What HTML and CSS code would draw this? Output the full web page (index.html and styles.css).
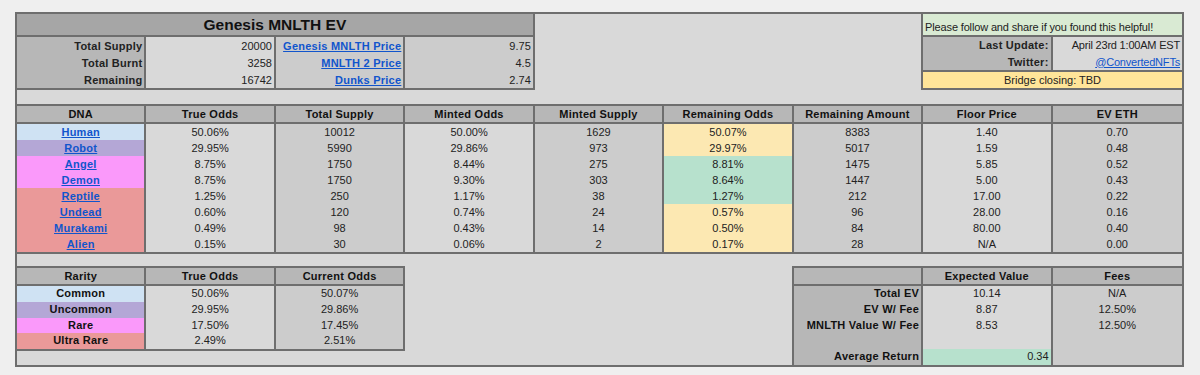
FILE: index.html
```html
<!DOCTYPE html>
<html>
<head>
<meta charset="utf-8">
<title>Genesis MNLTH EV</title>
<link rel="stylesheet" href="styles.css">
</head>
<body>
<div class="sheet">
  <div class="box title">Genesis MNLTH EV</div>

  <div class="box info g3 right bold">
    <div class="r">Total Supply</div>
    <div class="r">Total Burnt</div>
    <div class="r">Remaining</div>
  </div>
  <div class="box info g1 right">
    <div class="r">20000</div>
    <div class="r">3258</div>
    <div class="r">16742</div>
  </div>
  <div class="box info g2 right bold">
    <div class="r"><a href="#">Genesis MNLTH Price</a></div>
    <div class="r"><a href="#">MNLTH 2 Price</a></div>
    <div class="r"><a href="#">Dunks Price</a></div>
  </div>
  <div class="box info g2 right">
    <div class="r">9.75</div>
    <div class="r">4.5</div>
    <div class="r">2.74</div>
  </div>

  <div class="box follow er">Please follow and share if you found this helpful!</div>
  <div class="box meta-l g3 right bold">
    <div class="r">Last Update:</div>
    <div class="r">Twitter:</div>
  </div>
  <div class="box meta-v g1 right er">
    <div class="r">April 23rd 1:00AM EST</div>
    <div class="r"><a href="#" class="plain">@ConvertedNFTs</a></div>
  </div>
  <div class="box bridge er">Bridge closing: TBD</div>

  <div class="box hd">DNA</div>
  <div class="box hd">True Odds</div>
  <div class="box hd">Total Supply</div>
  <div class="box hd">Minted Odds</div>
  <div class="box hd">Minted Supply</div>
  <div class="box hd">Remaining Odds</div>
  <div class="box hd">Remaining Amount</div>
  <div class="box hd">Floor Price</div>
  <div class="box hd er">EV ETH</div>

  <div class="box dna bold">
    <div class="r human"><a href="#">Human</a></div>
    <div class="r robot"><a href="#">Robot</a></div>
    <div class="r pink"><a href="#">Angel</a></div>
    <div class="r pink"><a href="#">Demon</a></div>
    <div class="r red"><a href="#">Reptile</a></div>
    <div class="r red"><a href="#">Undead</a></div>
    <div class="r red"><a href="#">Murakami</a></div>
    <div class="r red"><a href="#">Alien</a></div>
  </div>
  <div class="box dna g1">
    <div class="r">50.06%</div><div class="r">29.95%</div><div class="r">8.75%</div><div class="r">8.75%</div>
    <div class="r">1.25%</div><div class="r">0.60%</div><div class="r">0.49%</div><div class="r">0.15%</div>
  </div>
  <div class="box dna g2">
    <div class="r">10012</div><div class="r">5990</div><div class="r">1750</div><div class="r">1750</div>
    <div class="r">250</div><div class="r">120</div><div class="r">98</div><div class="r">30</div>
  </div>
  <div class="box dna g1">
    <div class="r">50.00%</div><div class="r">29.86%</div><div class="r">8.44%</div><div class="r">9.30%</div>
    <div class="r">1.17%</div><div class="r">0.74%</div><div class="r">0.43%</div><div class="r">0.06%</div>
  </div>
  <div class="box dna g2">
    <div class="r">1629</div><div class="r">973</div><div class="r">275</div><div class="r">303</div>
    <div class="r">38</div><div class="r">24</div><div class="r">14</div><div class="r">2</div>
  </div>
  <div class="box dna">
    <div class="r yel">50.07%</div><div class="r yel">29.97%</div><div class="r grn">8.81%</div><div class="r grn">8.64%</div>
    <div class="r grn">1.27%</div><div class="r yel">0.57%</div><div class="r yel">0.50%</div><div class="r yel">0.17%</div>
  </div>
  <div class="box dna g2">
    <div class="r">8383</div><div class="r">5017</div><div class="r">1475</div><div class="r">1447</div>
    <div class="r">212</div><div class="r">96</div><div class="r">84</div><div class="r">28</div>
  </div>
  <div class="box dna g1">
    <div class="r">1.40</div><div class="r">1.59</div><div class="r">5.85</div><div class="r">5.00</div>
    <div class="r">17.00</div><div class="r">28.00</div><div class="r">80.00</div><div class="r">N/A</div>
  </div>
  <div class="box dna g2 er">
    <div class="r">0.70</div><div class="r">0.48</div><div class="r">0.52</div><div class="r">0.43</div>
    <div class="r">0.22</div><div class="r">0.16</div><div class="r">0.40</div><div class="r">0.00</div>
  </div>

  <div class="box hd rh">Rarity</div>
  <div class="box hd rh">True Odds</div>
  <div class="box hd rh">Current Odds</div>

  <div class="box hd eh c7"></div>
  <div class="box hd eh c8">Expected Value</div>
  <div class="box hd eh c9 er">Fees</div>

  <div class="box rar bold dark">
    <div class="r human">Common</div>
    <div class="r robot">Uncommon</div>
    <div class="r pink">Rare</div>
    <div class="r red">Ultra Rare</div>
  </div>
  <div class="box rar g1">
    <div class="r">50.06%</div><div class="r">29.95%</div><div class="r">17.50%</div><div class="r">2.49%</div>
  </div>
  <div class="box rar g2">
    <div class="r">50.07%</div><div class="r">29.86%</div><div class="r">17.45%</div><div class="r">2.51%</div>
  </div>

  <div class="box ev c7 g3 right bold dark eb">
    <div class="r">Total EV</div>
    <div class="r">EV W/ Fee</div>
    <div class="r">MNLTH Value W/ Fee</div>
    <div class="r"></div>
    <div class="r">Average Return</div>
  </div>
  <div class="box ev c8 g1 eb">
    <div class="r">10.14</div>
    <div class="r">8.87</div>
    <div class="r">8.53</div>
    <div class="r"></div>
    <div class="r grn right">0.34</div>
  </div>
  <div class="box ev c9 g2 er eb">
    <div class="r">N/A</div>
    <div class="r">12.50%</div>
    <div class="r">12.50%</div>
    <div class="r"></div>
    <div class="r"></div>
  </div>
</div>
</body>
</html>
```

FILE: styles.css
```css
* { box-sizing: border-box; }

body {
  margin: 0;
  background: #efefef;
  font-family: "Liberation Sans", Arial, sans-serif;
  font-size: 11px;
  color: #222;
}

.sheet {
  display: grid;
  grid-template-columns: repeat(9, 1fr);
  grid-template-rows: 23px 17px 18px 18px 16px 18px 130px 14px 18px 65px 14px;
  width: 1169px;
  margin: 12px 0 0 15px;
  border: 2px solid #6e6e6e;
  background: #d9d9d9;
}

.box {
  border: 2px solid #6e6e6e;
  margin: -2px 0 0 -2px;
  display: flex;
  flex-direction: column;
  min-width: 0;
  overflow: hidden;
  text-align: center;
  white-space: nowrap;
}
.er { margin-right: -2px; }
.eb { margin-bottom: -2px; }

.r { padding: 0 2px; }
.right { text-align: right; }
.bold { font-weight: bold; letter-spacing: 0.25px; }
.dark { color: #111; }

.g1 { background: #d9d9d9; }
.g2 { background: #cccccc; }
.g3 { background: #b7b7b7; }

a { color: #1155cc; text-decoration: underline; }

/* title */
.title {
  grid-column: 1 / 5;
  grid-row: 1;
  background: #a6a6a6;
  font-size: 15.5px;
  font-weight: bold;
  color: #111;
  justify-content: center;
  line-height: 19px;
}

/* top-left info */
.info { grid-row: 2 / 5; }
.info .r { height: 17px; line-height: 18px; }

/* top-right */
.follow {
  grid-column: 8 / 10;
  grid-row: 1;
  background: #d9ead3;
  justify-content: flex-end;
  text-align: left;
  padding: 0 2px 1px;
  line-height: 14px;
  letter-spacing: -0.15px;
}
.meta-l { grid-column: 8; grid-row: 2 / 4; }
.meta-v { grid-column: 9; grid-row: 2 / 4; letter-spacing: -0.2px; }
.meta-l .r, .meta-v .r { height: 16.5px; line-height: 17.5px; }
.bridge {
  grid-column: 8 / 10;
  grid-row: 4;
  background: #ffe599;
  line-height: 16px;
}
a.plain { font-weight: normal; }

/* headers */
.hd {
  grid-row: 6;
  background: #b7b7b7;
  font-weight: bold;
  letter-spacing: 0.25px;
  color: #111;
  line-height: 16px;
}
.rh, .eh { grid-row: 9; }
.c7 { grid-column: 7; }
.c8 { grid-column: 8; }
.c9 { grid-column: 9; }

/* DNA data */
.dna { grid-row: 7; }
.dna .r { height: 16px; line-height: 16px; }

.human { background: #cfe2f3; }
.robot { background: #b4a7d6; }
.pink { background: #fa99fa; }
.red { background: #ea9999; }
.yel { background: #fce8b2; }
.grn { background: #b7e1cd; }

/* rarity */
.rar { grid-row: 10; }
.rar .r { height: 15.75px; line-height: 15.75px; }

/* expected value */
.ev { grid-row: 10 / 12; }
.ev .r { height: 15.8px; line-height: 15.8px; }
```
